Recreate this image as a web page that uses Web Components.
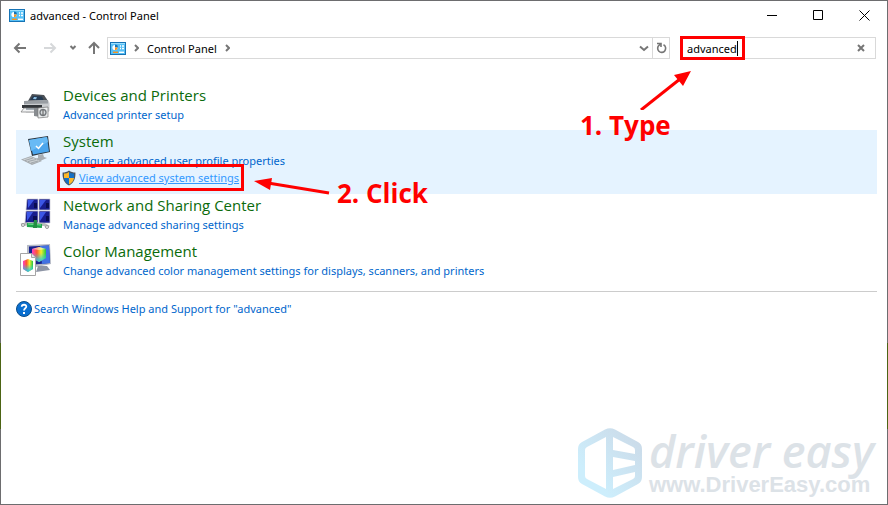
<!DOCTYPE html>
<html lang="en">
<head>
<meta charset="utf-8">
<title>advanced - Control Panel</title>
<style>
    html, body {
        height: 100%;
        margin: 0;
    }
    body {
        box-sizing: border-box;
        padding: 1px;
        background: linear-gradient(#6d6d6f 0 68%, #4c6414 68% 85%, #6d6d6f 85%);
        font: 11px/17px "Noto Sans", "Open Sans", sans-serif;
        color: #000;
    }
</style>
</head>
<body>
<control-panel-window></control-panel-window>

<script>
const ICONS = {
    panel: `<svg viewBox="0 0 16 13" width="16" height="13">
        <rect x=".5" y=".5" width="15" height="12" fill="#58c0f5" stroke="#1673b5"/>
        <path d="M1 1h14v1H1z" fill="#9be0ff"/>
        <circle cx="5" cy="5.500" r="2.600" fill="#fff"/>
        <path d="M5 5.500V2.500A3 3 0 0 1 8 5.500z" fill="#1673b5"/>
        <path d="M5 5.500h2.600A2.600 2.600 0 0 1 5 8.100z" fill="#f7941d"/>
        <path d="M10 4h1M12 4h2M10 6.500h1M12 6.500h2" stroke="#fff" stroke-width="1.400"/>
        <path d="M3 10.300h5" stroke="#f7941d" stroke-width="1.400"/>
        <path d="M9 10.300h5" stroke="#fff" stroke-width="1.400"/>
    </svg>`,
    printer: `<svg viewBox="0 0 32 32" width="32" height="32">
        <path d="M8 13 12 6l12 1 4 6z" fill="#4b5056"/>
        <path d="M13 8l9 .5 2 4.500-14-1z" fill="#243a52"/>
        <path d="M14 9l3 .2-1 2-3-.2z" fill="#8fc3e8"/>
        <path d="M4 13l24-1 1.500 3v8l-2 1.500H6L4 22z" fill="#c9cccf"/>
        <path d="M4 13l24-1v3.500L4 16z" fill="#989da2"/>
        <path d="M2 17h20v3H2z" fill="#33373b"/>
        <path d="M4 20h14l-3 4H1z" fill="#f2f3f4" stroke="#777" stroke-width=".7"/>
        <path d="M6 21h8" stroke="#5e6e7b"/>
        <path d="M14 20h6v9l-6-1z" fill="#888c90"/>
        <path d="M18 20l10-1v10l-10 1z" fill="#eceeef" stroke="#777" stroke-width=".7"/>
        <circle cx="23" cy="24.500" r="3.700" fill="#777c80"/>
        <circle cx="23" cy="24.500" r="2.200" fill="#d9dddf"/>
        <path d="M23 21.500v6" stroke="#555"/>
    </svg>`,
    system: `<svg viewBox="0 0 32 32" width="32" height="32">
        <path d="M8 5 28 2l2 16-18 4z" fill="#2c3640"/>
        <path d="M9 6l18-3 2 14.500-16 3z" fill="#4ba5ec"/>
        <path d="M9 6l18-3 1 5-17 9z" fill="#68baf5"/>
        <path d="M16 12l2.500 2.500L23 9" fill="none" stroke="#fff" stroke-width="1.500"/>
        <path d="M18 21l5-1 1 3 3 1-7 3-5-2 3-1z" fill="#a7adb3"/>
        <path d="M1 25.500 11 22l11 5-10 4z" fill="#a6abaf"/>
        <path d="M3 25.500l8-2.500 9 4-8 2.500z" fill="#cdd1d4"/>
        <path d="M5 26.500l8-2.500M8 27.500l8-2M11 29l7-2" stroke="#8d9398" stroke-width=".7"/>
    </svg>`,
    network: `<svg viewBox="0 0 32 32" width="32" height="32">
        <g stroke="#c9c9d4" stroke-width=".7">
            <path d="M7 1h11v11H6z" fill="#171c8c"/>
            <path d="M19 1h11v11H19z" fill="#171c8c"/>
            <path d="M6 13h12v12H5z" fill="#171c8c"/>
            <path d="M19 13h11v12H19z" fill="#171c8c"/>
        </g>
        <path d="M8 2h6l-6 8zM20 2h6l-6 8zM7 14h6l-6 9zM20 14h6l-6 9z" fill="#3c56e6"/>
        <path d="M14 5h3v5h-3zM26 5h3v5h-3zM13 18h4v5h-4zM26 18h3v5h-3z" fill="#090c52"/>
        <path d="M1 27 9 25.500l15 1 5 2.500" fill="none" stroke="#b8bbbb" stroke-width="3"/>
        <path d="M7 27l15 1" stroke="#1ea54c" stroke-width="4"/>
        <path d="M8 26l13 1" stroke="#6ee68d" stroke-width="1"/>
        <path d="M14 22h3v8h-4z" fill="#238d43"/>
        <circle cx="3" cy="27" r="1.500" fill="#eee" stroke="#999"/>
        <circle cx="27" cy="29" r="1.500" fill="#eee" stroke="#999"/>
    </svg>`,
    color: `<svg viewBox="0 0 32 32" width="32" height="32">
        <defs>
            <linearGradient id="hue"><stop stop-color="#ff3fc5"/><stop offset=".35" stop-color="#ff5a2e"/><stop offset=".65" stop-color="#f5f02c"/><stop offset="1" stop-color="#1fc742"/></linearGradient>
            <linearGradient id="cool" x2="0" y2="1"><stop offset=".4" stop-color="#1bd2f3" stop-opacity="0"/><stop offset="1" stop-color="#1cc5f0"/></linearGradient>
        </defs>
        <path d="M7 1l23-1 1 20-14 3H7z" fill="#b5bac6"/>
        <path d="M9 2.500 29 1.500 30 19 9 21z" fill="#17238f"/>
        <path d="M20 2l9-.5 1 17.500-8 1z" fill="#4272e2"/>
        <path d="M18 22h9l3 4-14 2z" fill="#8f96a6"/>
        <path d="M12 5l7-2 7 2v9l-7 4-7-4z" fill="url(#hue)"/>
        <path d="M12 5l7-2 7 2v9l-7 4-7-4z" fill="url(#cool)"/>
        <path d="M12 5l7-2 7 2-7 1z" fill="#fff" opacity=".5"/>
        <path d="M.5 9.500h11l4 4v18H.5z" fill="#fff" stroke="#a5a5a5"/>
        <path d="M11.500 9.500v4h4" fill="#e5e5e5" stroke="#a5a5a5"/>
        <path d="M3 17l5-2 5 2v8l-5 3-5-3z" fill="url(#hue)"/>
        <path d="M3 17l5-2 5 2v8l-5 3-5-3z" fill="url(#cool)"/>
    </svg>`,
    shield: `<svg viewBox="0 0 14 16" width="14" height="16">
        <path d="M7 .5C5 2 3 2.500.6 2.500c-.3 6 1.400 10.500 6.400 13 5-2.500 6.700-7 6.400-13C11 2.500 9 2 7 .5z" fill="#4a5560"/>
        <path d="M7 2C5.500 3 4 3.500 2 3.600V8h5z" fill="#fcb829"/>
        <path d="M7 2c1.500 1 3 1.500 5 1.600V8H7z" fill="#1570c5"/>
        <path d="M2 8c.5 3 2 5 5 6.400V8z" fill="#1570c5"/>
        <path d="M12 8c-.5 3-2 5-5 6.400V8z" fill="#fcb829"/>
    </svg>`,
    help: `<svg viewBox="0 0 16 16" width="16" height="16">
        <circle cx="8" cy="8" r="7.500" fill="#0a6fd0" stroke="#0b4d88"/>
        <path d="M5.700 5.800C5.800 3 10.500 3.200 10.300 5.700 10.200 7.300 8 7.300 8 9.500" fill="none" stroke="#fff" stroke-width="1.800"/>
        <path d="M7 11h2v2H7z" fill="#fff"/>
    </svg>`
};

class PanelIcon extends HTMLElement {
    constructor() {
        super();
        this.attachShadow({ mode: 'open' });
    }

    connectedCallback() {
        this.shadowRoot.innerHTML = `
            <style>
                :host { display: inline-flex; flex: none; }
            </style>
            ${ICONS[this.getAttribute('name')]}
        `;
    }
}

class TitleBar extends HTMLElement {
    constructor() {
        super();
        this.attachShadow({ mode: 'open' });
    }

    connectedCallback() {
        this.shadowRoot.innerHTML = `
            <style>
                :host {
                    display: flex;
                    align-items: center;
                    height: 29px;
                    padding-left: 8px;
                }
                .title { flex: 1; margin-left: 5px; }
                button {
                    width: 46px;
                    height: 29px;
                    padding: 0;
                    border: none;
                    background: none;
                    display: grid;
                    place-items: center;
                }
                button:hover { background: #e5e5e5; }
                svg { fill: none; stroke: #000; }
            </style>
            <panel-icon name="panel"></panel-icon>
            <span class="title"><slot></slot></span>
            <button aria-label="Minimize"><svg width="11" height="11"><path d="M0 5.500h10"/></svg></button>
            <button aria-label="Maximize"><svg width="11" height="11"><path d="M.5.5h9v9h-9z"/></svg></button>
            <button aria-label="Close"><svg width="11" height="11"><path d="M.5.5l10 10M10.500.5l-10 10"/></svg></button>
        `;
    }
}

class NavBar extends HTMLElement {
    constructor() {
        super();
        this.attachShadow({ mode: 'open' });
    }

    connectedCallback() {
        this.shadowRoot.innerHTML = `
            <style>
                :host {
                    display: flex;
                    align-items: center;
                    padding: 7px 11px 0 10px;
                }
                button {
                    flex: none;
                    padding: 0;
                    border: none;
                    background: none;
                    display: grid;
                    place-items: center;
                    height: 20px;
                }
                svg { fill: none; stroke: #767676; stroke-width: 2; }
                .arrow { width: 18px; }
                .forward { margin-left: 12px; }
                .forward svg { stroke: #d6d8da; }
                .recent { width: 12px; margin-left: 8px; }
                .up { margin: 0 4px 0 6px; }
                .address {
                    flex: 1;
                    display: flex;
                    align-items: center;
                    height: 20px;
                    border: 1px solid #d9d9d9;
                    padding-left: 2px;
                }
                .chevron { flex: none; margin: 0 8px; }
                .address a { color: #000; text-decoration: none; }
                .history { width: 16px; margin-left: auto; }
                .refresh { width: 17px; border-left: 1px solid #d9d9d9; }
                .search {
                    flex: none;
                    display: flex;
                    align-items: center;
                    box-sizing: border-box;
                    width: 196px;
                    height: 22px;
                    margin: 0 0 0 10px;
                    padding-left: 1px;
                    border: 1px solid #d9d9d9;
                }
                .typed {
                    display: flex;
                    align-items: center;
                    height: 20px;
                    padding: 0 5px;
                    outline: 3px solid #f00;
                    outline-offset: -1px;
                }
                input {
                    field-sizing: content;
                    padding: 0;
                    border: none;
                    outline: none;
                    background: none;
                    font: inherit;
                    color: inherit;
                }
                .caret { width: 1px; height: 15px; background: #000; }
                .clear { width: 16px; margin: 0 6px 0 auto; }
            </style>
            <button class="arrow" aria-label="Back"><svg width="14" height="12"><path d="M13 6H2M6.500 1.500 2 6l4.500 4.500"/></svg></button>
            <button class="arrow forward" aria-label="Forward"><svg width="14" height="12"><path d="M1 6h11M7.500 1.500 12 6l-4.500 4.500"/></svg></button>
            <button class="recent" aria-label="Recent locations"><svg width="8" height="6"><path d="M1.500 1 4 3.500 6.500 1"/></svg></button>
            <button class="arrow up" aria-label="Up"><svg width="14" height="14"><path d="M7 13V2M2 7l5-5 5 5"/></svg></button>
            <div class="address">
                <panel-icon name="panel"></panel-icon>
                <svg class="chevron" width="5" height="8"><path d="M1 1l3 3-3 3"/></svg>
                <a href="#control-panel">Control Panel</a>
                <svg class="chevron" width="5" height="8"><path d="M1 1l3 3-3 3"/></svg>
                <button class="history" aria-label="Previous locations"><svg width="10" height="7"><path d="M1 1.500 5 5l4-3.500"/></svg></button>
                <button class="refresh" aria-label="Refresh"><svg width="11" height="12"><path d="M7.500 2.800A4 4 0 1 1 3.200 3.200L5 2M1 1.500h4V5" style="stroke-width:1.600"/></svg></button>
            </div>
            <form class="search">
                <span class="typed"><input type="text" value="advanced" aria-label="Search Control Panel"><span class="caret"></span></span>
                <button class="clear" type="button" aria-label="Clear search"><svg width="8" height="8"><path d="M1 1l6 6M7 1 1 7"/></svg></button>
            </form>
        `;
    }
}

class PanelCategory extends HTMLElement {
    constructor() {
        super();
        this.attachShadow({ mode: 'open' });
    }

    connectedCallback() {
        const icon = this.getAttribute('icon');
        const heading = this.getAttribute('heading');

        this.shadowRoot.innerHTML = `
            <style>
                :host {
                    display: flex;
                    gap: 11px;
                    padding: 1px 4px 7px;
                }
                :host([active]) { background: #e5f3ff; padding-bottom: 8px; }
                panel-icon { margin-top: 3px; height: 32px; }
                h2 { margin: 0 0 1px; font: 400 15px/20px "Open Sans", sans-serif; }
                h2 a { color: #0b6b0b; text-decoration: none; }
                .tasks { display: flex; flex-direction: column; align-items: flex-start; }
            </style>
            <panel-icon name="${icon}"></panel-icon>
            <div>
                <h2><a href="#${icon}">${heading}</a></h2>
                <div class="tasks"><slot></slot></div>
            </div>
        `;
    }
}

class TaskLink extends HTMLElement {
    constructor() {
        super();
        this.attachShadow({ mode: 'open' });
    }

    connectedCallback() {
        const icon = this.getAttribute('icon');

        this.shadowRoot.innerHTML = `
            <style>
                :host { display: flex; align-items: center; position: relative; }
                a { color: #0066cc; text-decoration: none; }
                a:hover { text-decoration: underline; }
                panel-icon { margin-right: 2px; }
                :host([icon="shield"]) panel-icon { margin-left: -1px; margin-right: 3px; }
                :host([marked]) a { color: #3399ff; text-decoration: underline; }
                :host([marked])::after {
                    content: "";
                    position: absolute;
                    inset: -5px -5px -5px -6px;
                    border: 3px solid #f00;
                }
            </style>
            ${icon ? `<panel-icon name="${icon}"></panel-icon>` : ''}
            <a href="#task"><slot></slot></a>
        `;
    }
}

class StepNote extends HTMLElement {
    constructor() {
        super();
        this.attachShadow({ mode: 'open' });
    }

    connectedCallback() {
        this.shadowRoot.innerHTML = `
            <style>
                :host {
                    display: block;
                    position: absolute;
                    color: #f00;
                    font: 700 26px/30px "Open Sans", sans-serif;
                    white-space: nowrap;
                    pointer-events: none;
                }
                :host([arrow="up"]) { top: 68px; left: 579px; }
                :host([arrow="left"]) { top: 177px; left: 252px; display: flex; }
                svg { display: block; fill: currentColor; stroke: currentColor; }
                :host([arrow="up"]) svg { margin-left: 59px; }
                :host([arrow="left"]) span { margin-left: 7px; }
            </style>
            ${this.getAttribute('arrow') === 'up'
                ? '<svg width="54" height="41"><path d="M2 41 41 10" stroke-width="3"/><path d="M52 2 44 17 35 6z" stroke="none"/></svg>'
                : '<svg width="77" height="18"><path d="M15 5 76 15" stroke-width="3"/><path d="M1 3 19 0 17 12z" stroke="none"/></svg>'}
            <span><slot></slot></span>
        `;
    }
}

class BrandMark extends HTMLElement {
    constructor() {
        super();
        this.attachShadow({ mode: 'open' });
    }

    connectedCallback() {
        this.shadowRoot.innerHTML = `
            <style>
                :host {
                    display: flex;
                    gap: 7px;
                    position: absolute;
                    right: 13px;
                    bottom: 6px;
                    color: #dce2e7;
                    pointer-events: none;
                }
                .text { display: flex; flex-direction: column; }
                .name { font: italic 600 45px/46px "Open Sans", sans-serif; }
                .site { font: bold 22px/22px "Liberation Sans", sans-serif; }
            </style>
            <svg width="64" height="70" viewBox="0 0 64 70">
                <defs>
                    <linearGradient id="ice" x1="1" y1="0" x2="0" y2="1">
                        <stop offset=".1" stop-color="#cbdbe9"/>
                        <stop offset=".75" stop-color="#cdeefc"/>
                    </linearGradient>
                </defs>
                <path fill="url(#ice)" fill-rule="evenodd" d="M27 1.500Q32-1 37 1.500L60 14Q64 16 64 21V49Q64 54 60 56L37 68.500Q32 71 27 68.500L4 56Q0 54 0 49V21Q0 16 4 14zM28 9 9 19Q7 20 7 22V48Q7 50 9 51L28 61zM35 9V22L57 26V22Q57 20 55 19zM35 29V42L57 37V33zM35 49V61L55 51Q57 50 57 48V44z"/>
            </svg>
            <div class="text">
                <span class="name">driver easy</span>
                <span class="site">www.DriverEasy.com</span>
            </div>
        `;
    }
}

class ControlPanelWindow extends HTMLElement {
    constructor() {
        super();
        this.attachShadow({ mode: 'open' });
    }

    connectedCallback() {
        this.shadowRoot.innerHTML = `
            <style>
                :host {
                    display: block;
                    position: relative;
                    min-height: 100%;
                    background: #fff;
                }
                main { padding: 25px 10px 0 15px; }
                .help { margin-top: 5px; padding-top: 8px; border-top: 1px solid #ccc; }
            </style>
            <title-bar>advanced - Control Panel</title-bar>
            <nav-bar></nav-bar>
            <main>
                <panel-category icon="printer" heading="Devices and Printers">
                    <task-link>Advanced printer setup</task-link>
                </panel-category>
                <panel-category icon="system" heading="System" active>
                    <task-link>Configure advanced user profile properties</task-link>
                    <task-link icon="shield" marked>View advanced system settings</task-link>
                </panel-category>
                <panel-category icon="network" heading="Network and Sharing Center">
                    <task-link>Manage advanced sharing settings</task-link>
                </panel-category>
                <panel-category icon="color" heading="Color Management">
                    <task-link>Change advanced color management settings for displays, scanners, and printers</task-link>
                </panel-category>
                <div class="help">
                    <task-link icon="help">Search Windows Help and Support for "advanced"</task-link>
                </div>
            </main>
            <step-note arrow="up">1. Type</step-note>
            <step-note arrow="left">2. Click</step-note>
            <brand-mark></brand-mark>
        `;
    }
}

customElements.define('panel-icon', PanelIcon);
customElements.define('title-bar', TitleBar);
customElements.define('nav-bar', NavBar);
customElements.define('task-link', TaskLink);
customElements.define('panel-category', PanelCategory);
customElements.define('step-note', StepNote);
customElements.define('brand-mark', BrandMark);
customElements.define('control-panel-window', ControlPanelWindow);
</script>
</body>
</html>
